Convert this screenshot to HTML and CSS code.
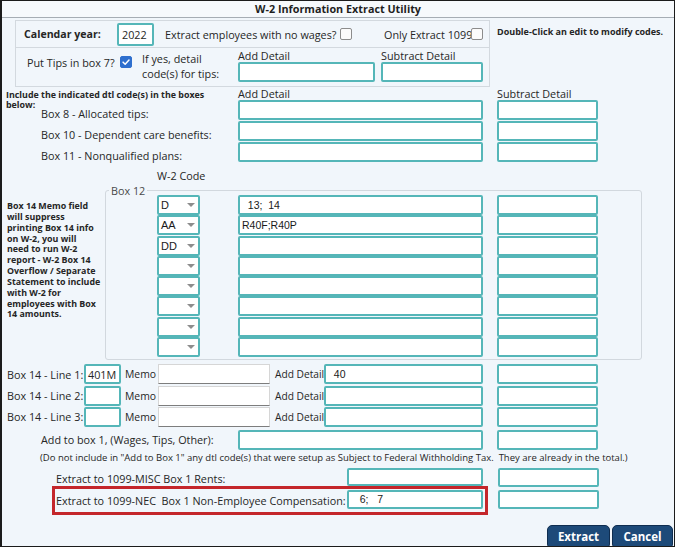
FILE: index.html
```html
<!DOCTYPE html>
<html>
<head>
<meta charset="utf-8">
<title>W-2 Information Extract Utility</title>
<link rel="stylesheet" href="styles.css">
</head>
<body>
<div class="window">
  <div class="titlebar">W-2 Information Extract Utility</div>

  <div class="top">
    <div class="topbox">
      <div class="row1">
        <span class="cal-label">Calendar year:</span>
        <span class="inp year">2022</span>
        <span class="nowages">Extract employees with no wages?</span>
        <span class="cb"></span>
        <span class="only">Only Extract 1099</span>
        <span class="cb"></span>
      </div>
      <div class="row2">
        <span class="tips">Put Tips in box 7?</span>
        <span class="cb checked"><svg viewBox="0 0 12 12" width="10" height="10"><polyline points="2.5,6.2 5,8.6 9.6,3.6" fill="none" stroke="#fff" stroke-width="1.8" stroke-linecap="round" stroke-linejoin="round"/></svg></span>
        <span class="ifyes">If yes, detail<br>code(s) for tips:</span>
        <div class="capfield add-tips"><span class="cap">Add Detail</span><span class="inp"></span></div>
        <div class="capfield sub-tips"><span class="cap">Subtract Detail</span><span class="inp"></span></div>
      </div>
    </div>
    <div class="hint">Double-Click an edit to modify codes.</div>
  </div>

  <div class="grow header">
    <div class="include">Include the indicated dtl code(s) in the boxes<br>below:</div>
    <div class="cap">Add Detail</div>
    <div></div>
    <div class="cap">Subtract Detail</div>
  </div>
  <div class="grow boxrow">
    <div class="rlabel low">Box 8 - Allocated tips:</div>
    <span class="inp"></span><span></span><span class="inp"></span>
  </div>
  <div class="grow boxrow">
    <div class="rlabel low">Box 10 - Dependent care benefits:</div>
    <span class="inp"></span><span></span><span class="inp"></span>
  </div>
  <div class="grow boxrow">
    <div class="rlabel low">Box 11 - Nonqualified plans:</div>
    <span class="inp"></span><span></span><span class="inp"></span>
  </div>

  <div class="w2code">W-2 Code</div>

  <div class="b12">
    <div class="b12-note">Box 14 Memo field<br>will suppress<br>printing Box 14 info<br>on W-2, you will<br>need to run W-2<br>report - W-2 Box 14<br>Overflow / Separate<br>Statement to include<br>with W-2 for<br>employees with Box<br>14 amounts.</div>
    <div class="b12-box">
      <span class="legend">Box 12</span>
      <div class="b12row"><span class="inp combo"><span class="cv">D</span><i class="tri"></i></span><span class="inp wide val">  13;  14</span><span class="inp sub"></span></div>
      <div class="b12row"><span class="inp combo"><span class="cv">AA</span><i class="tri"></i></span><span class="inp wide val">R40F;R40P</span><span class="inp sub"></span></div>
      <div class="b12row"><span class="inp combo"><span class="cv">DD</span><i class="tri"></i></span><span class="inp wide"></span><span class="inp sub"></span></div>
      <div class="b12row"><span class="inp combo"><span class="cv"></span><i class="tri"></i></span><span class="inp wide"></span><span class="inp sub"></span></div>
      <div class="b12row"><span class="inp combo"><span class="cv"></span><i class="tri"></i></span><span class="inp wide"></span><span class="inp sub"></span></div>
      <div class="b12row"><span class="inp combo"><span class="cv"></span><i class="tri"></i></span><span class="inp wide"></span><span class="inp sub"></span></div>
      <div class="b12row"><span class="inp combo"><span class="cv"></span><i class="tri"></i></span><span class="inp wide"></span><span class="inp sub"></span></div>
      <div class="b12row"><span class="inp combo"><span class="cv"></span><i class="tri"></i></span><span class="inp wide"></span><span class="inp sub"></span></div>
    </div>
  </div>

  <div class="b14">
    <div class="b14row">
      <span class="b14label">Box 14 - Line 1:</span>
      <span class="inp code">401M</span>
      <span class="memo-l">Memo</span>
      <span class="memo"></span>
      <span class="ad-l">Add Detail</span>
      <span class="inp ad val">  40</span>
      <span class="inp sub"></span>
    </div>
    <div class="b14row">
      <span class="b14label">Box 14 - Line 2:</span>
      <span class="inp code"></span>
      <span class="memo-l">Memo</span>
      <span class="memo"></span>
      <span class="ad-l">Add Detail</span>
      <span class="inp ad"></span>
      <span class="inp sub"></span>
    </div>
    <div class="b14row">
      <span class="b14label">Box 14 - Line 3:</span>
      <span class="inp code"></span>
      <span class="memo-l">Memo</span>
      <span class="memo"></span>
      <span class="ad-l">Add Detail</span>
      <span class="inp ad"></span>
      <span class="inp sub"></span>
    </div>
  </div>

  <div class="grow boxrow addbox1">
    <div class="rlabel">Add to box 1, (Wages, Tips, Other):</div>
    <span class="inp"></span><span></span><span class="inp"></span>
  </div>
  <div class="note">(Do not include in "Add to Box 1" any dtl code(s) that were setup as Subject to Federal Withholding Tax.  They are already in the total.)</div>

  <div class="misc">
    <span class="x-label">Extract to 1099-MISC Box 1 Rents:</span>
    <span class="inp x-in"></span>
    <span class="inp x-sub"></span>
  </div>
  <div class="nec">
    <div class="redbox">
      <span class="x-label">Extract to 1099-NEC  Box 1 Non-Employee Compensation:</span>
      <span class="inp x-in val">   6;   7</span>
    </div>
    <span class="inp x-sub"></span>
  </div>

  <div class="buttons">
    <span class="btn extract">Extract</span>
    <span class="btn cancel">Cancel</span>
  </div>
</div>
</body>
</html>
```
FILE: styles.css
```css
* { box-sizing: border-box; }
html, body { margin: 0; padding: 0; }
body {
  font-family: "Open Sans", "Noto Sans", sans-serif;
  font-size: 10.8px;
  color: #262626;
  background: #ffffff;
}
.window {
  width: 675px;
  height: 547px;
  border: 1px solid #1b1b1b;
  border-left-width: 2px;
  background: #f1f6fb;
  display: flex;
  flex-direction: column;
  overflow: hidden;
}
.titlebar {
  height: 17px;
  flex: none;
  border-bottom: 1px solid #a6adb4;
  background: #f6f9fc;
  text-align: center;
  font-weight: 700;
  font-size: 10.8px;
  line-height: 16px;
  color: #1f1f1f;
}

/* generic input */
.inp {
  display: flex;
  align-items: center;
  height: 20px;
  background: #ffffff;
  border: 2px solid #55b6b8;
  border-radius: 2px;
  padding-left: 2px;
  white-space: pre;
  overflow: hidden;
}
.val {
  font-family: "Liberation Sans", Arial, sans-serif;
  font-size: 10.5px;
  color: #1a1a1a;
}
.cap { line-height: 13px; white-space: nowrap; }

/* checkbox */
.cb {
  flex: none;
  width: 12px;
  height: 12px;
  border: 1px solid #8c8c8c;
  border-radius: 2px;
  background: #fbfbfb;
}
.cb.checked {
  background: #2f6fce;
  border-color: #2f6fce;
  display: flex;
  align-items: center;
  justify-content: center;
}
.cb svg { display: block; }

/* top section */
.top { display: flex; margin-top: 2px; flex: none; }
.topbox {
  margin-left: 13px;
  width: 475px;
  border: 1px solid #d3d9df;
}
.row1 {
  height: 27px;
  display: flex;
  align-items: center;
  padding-left: 8px;
  border-bottom: 1px solid #d3d9df;
}
.cal-label { width: 93px; font-weight: 700; font-size: 10.6px; white-space: nowrap; }
.year {
  width: 37px;
  height: 23px;
  padding-left: 3px;
  font-size: 10.8px;
  border-radius: 2px;
}
.nowages { margin-left: 11px; width: 175px; white-space: nowrap; }
.only { margin-left: 32px; width: 87px; white-space: nowrap; }
.row2 {
  height: 38px;
  display: flex;
  align-items: flex-start;
  padding-left: 11px;
}
.tips { width: 93px; margin-top: 7px; line-height: 15px; white-space: nowrap; }
.row2 .cb { margin-top: 8px; }
.ifyes { margin-left: 10px; width: 96px; margin-top: 3px; line-height: 15px; }
.capfield { display: flex; flex-direction: column; padding-top: 1px; }
.add-tips { width: 137px; }
.sub-tips { width: 102px; margin-left: 6px; }
.capfield .inp { height: 20px; }
.hint {
  margin-left: 7px;
  padding-top: 5px;
  font-weight: 700;
  font-size: 9px;
  white-space: nowrap;
}

/* 4-column rows */
.grow {
  display: grid;
  grid-template-columns: 236px 245px 14px 101px;
  flex: none;
}
.header { height: 13px; grid-template-rows: 13px; align-items: end; }
.include {
  padding-left: 4px;
  font-weight: 700;
  font-size: 8.9px;
  line-height: 10px;
  align-self: start;
  margin-top: 3px;
  white-space: nowrap;
}
.header .cap { line-height: 13px; }
.boxrow { height: 20px; margin-bottom: 1px; }
.rlabel {
  padding-left: 39px;
  display: flex;
  align-items: center;
  white-space: nowrap;
}
.rlabel.low { padding-top: 6px; }

.w2code {
  flex: none;
  margin-top: 6px;
  height: 14px;
  line-height: 14px;
  padding-left: 155px;
}

/* box 12 */
.b12 { display: flex; margin-top: 7px; flex: none; }
.b12-note {
  width: 103px;
  padding-left: 5px;
  margin-top: 11px;
  font-weight: 700;
  font-size: 8.9px;
  line-height: 10.85px;
  white-space: nowrap;
}
.b12-box {
  position: relative;
  width: 537px;
  border: 1px solid #d2d8de;
  border-radius: 3px;
  padding: 4px 0 2px 51px;
}
.legend {
  position: absolute;
  top: -8px;
  left: 3px;
  padding: 0 2px;
  background: #f1f6fb;
  line-height: 15px;
  font-size: 10.8px;
  color: #4a4a4a;
}
.b12row { display: flex; height: 20px; margin-bottom: 0.3px; }
.combo {
  width: 43px;
  justify-content: space-between;
  padding-right: 3px;
  font-family: "Liberation Sans", Arial, sans-serif;
  font-size: 11px;
  color: #1a1a1a;
}
.tri {
  display: block;
  width: 0;
  height: 0;
  border-left: 4px solid transparent;
  border-right: 4px solid transparent;
  border-top: 4px solid #8d8d8d;
}
.b12row .wide { width: 245px; margin-left: 38px; }
.b12row .sub { width: 101px; margin-left: 14px; }

/* box 14 */
.b14 { margin-top: 4px; flex: none; }
.b14row { display: flex; height: 20px; margin-bottom: 1.2px; align-items: center; }
.b14row > * { flex: none; }
.b14label { width: 82px; padding-left: 5px; white-space: nowrap; }
.code { width: 37px; }
.memo-l { width: 37px; padding-left: 4px; font-size: 10.4px; }
.memo {
  width: 112px;
  height: 20px;
  background: #ffffff;
  border: 1px solid #d6d6d6;
  border-bottom-color: #7d7d7d;
}
.ad-l { width: 54px; padding-left: 5px; white-space: nowrap; font-size: 10.2px; }
.ad { width: 159px; }
.b14row .sub { width: 101px; margin-left: 14px; }

.addbox1 { margin-top: 2px; }
.note {
  flex: none;
  height: 14px;
  line-height: 14px;
  padding-left: 38px;
  font-size: 9.5px;
  white-space: pre;
}

/* 1099 rows */
.misc {
  flex: none;
  display: flex;
  height: 18px;
  margin-top: 3px;
  margin-left: 50px;
  padding-left: 4px;
}
.x-label { width: 291px; flex: none; white-space: pre; display: flex; align-items: flex-end; line-height: 14px; }
.misc .x-in { width: 136px; height: 18px; }
.misc .x-sub { width: 101px; height: 19px; margin-left: 15px; }
.nec { flex: none; display: flex; margin-left: 50px; align-items: flex-start; }
.redbox {
  display: flex;
  width: 436px;
  border: 3px solid #c4262b;
  padding: 1px 2px 3px 1px;
}
.redbox .x-label { align-items: center; padding-top: 3px; }
.redbox .x-in { width: 136px; height: 19px; }
.nec .x-sub { width: 101px; height: 19px; margin-left: 10px; margin-top: 4px; }

/* buttons */
.buttons {
  flex: none;
  display: flex;
  justify-content: flex-end;
  gap: 2px;
  margin-top: 10px;
  padding-right: 1px;
}
.btn {
  height: 24px;
  display: flex;
  align-items: center;
  justify-content: center;
  background: #1d4a79;
  border: 1px solid #0f2d50;
  border-radius: 5px;
  color: #ffffff;
  font-weight: 700;
  font-size: 11.5px;
}
.extract { width: 63px; }
.cancel { width: 61px; }
```
